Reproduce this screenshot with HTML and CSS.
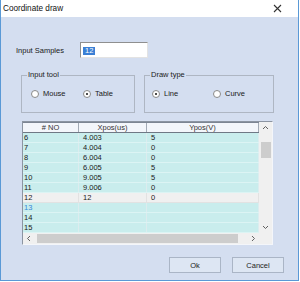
FILE: index.html
```html
<!DOCTYPE html>
<html lang="en">
<head>
    <meta charset="UTF-8">
    <title>Coordinate draw</title>
    <link rel="stylesheet" href="styles.css">
</head>
<body>

    <div class="window">
        <div class="titlebar">
            <span class="title">Coordinate draw</span>
            <svg class="close" width="9" height="9" viewBox="0 0 9 9">
                <path d="M1 1 L8 8 M8 1 L1 8" stroke="#333" stroke-width="1.1" fill="none"/>
            </svg>
        </div>

        <div class="content">
            <div class="samples">
                <label for="samples">Input Samples</label>
                <div class="textbox"><span class="selected">12</span></div>
            </div>

            <div class="groups">
                <fieldset class="group group-tool">
                    <legend>Input tool</legend>
                    <div class="radios">
                        <span class="radio"><i class="dot"></i>Mouse</span>
                        <span class="radio"><i class="dot on"></i>Table</span>
                    </div>
                </fieldset>
                <fieldset class="group group-type">
                    <legend>Draw type</legend>
                    <div class="radios">
                        <span class="radio"><i class="dot on"></i>Line</span>
                        <span class="radio"><i class="dot"></i>Curve</span>
                    </div>
                </fieldset>
            </div>

            <div class="grid">
                <div class="grid-main">
                    <div class="table">
                        <div class="row head">
                            <span>#&nbsp;NO</span><span>Xpos(us)</span><span>Ypos(V)</span>
                        </div>
                        <div class="row"><span>6</span><span>4.003</span><span>5</span></div>
                        <div class="row"><span>7</span><span>4.004</span><span>0</span></div>
                        <div class="row"><span>8</span><span>6.004</span><span>0</span></div>
                        <div class="row"><span>9</span><span>6.005</span><span>5</span></div>
                        <div class="row"><span>10</span><span>9.005</span><span>5</span></div>
                        <div class="row"><span>11</span><span>9.006</span><span>0</span></div>
                        <div class="row current"><span>12</span><span>12</span><span>0</span></div>
                        <div class="row new"><span>13</span><span></span><span></span></div>
                        <div class="row"><span>14</span><span></span><span></span></div>
                        <div class="row"><span>15</span><span></span><span></span></div>
                    </div>
                    <div class="vscroll">
                        <svg width="7" height="5" viewBox="0 0 7 5"><path d="M1 4 L3.5 1.5 L6 4" stroke="#606060" fill="none"/></svg>
                        <div class="vthumb"></div>
                        <div class="spacer"></div>
                        <svg width="7" height="5" viewBox="0 0 7 5"><path d="M1 1 L3.5 3.5 L6 1" stroke="#606060" fill="none"/></svg>
                    </div>
                </div>
                <div class="grid-foot">
                    <div class="hscroll">
                        <svg width="5" height="7" viewBox="0 0 5 7"><path d="M4 1 L1.5 3.5 L4 6" stroke="#606060" fill="none"/></svg>
                        <div class="hthumb"></div>
                        <svg width="5" height="7" viewBox="0 0 5 7"><path d="M1 1 L3.5 3.5 L1 6" stroke="#606060" fill="none"/></svg>
                    </div>
                    <div class="corner"></div>
                </div>
            </div>

            <div class="buttons">
                <button>Ok</button>
                <button>Cancel</button>
            </div>
        </div>
    </div>

</body>
</html>
```

FILE: styles.css
```css
/* Page */
body {
    margin: 0;
    background: #ffffff;
    font-family: 'Liberation Sans', Arial, sans-serif;
    font-size: 7.5px;
    color: #1a1a1a;
}
/* Dialog window */
.window {
    width: 299px;
    height: 281px;
    box-sizing: border-box;
    border: 1px solid #5a99d6;
    border-top: none;
    background: #d4def0;
}
.titlebar {
    height: 17px;
    background: #ffffff;
    display: flex;
    justify-content: space-between;
    align-items: center;
    padding: 0 16px 0 2px;
}
.title {
    font-size: 8.2px;
    color: #111;
}
/* Sample count row */
.content {
    display: flex;
    flex-direction: column;
}
.samples {
    display: flex;
    align-items: center;
    margin: 25px 0 0 15px;
    height: 16px;
}
.samples label {
    width: 64px;
}
.textbox {
    width: 68px;
    height: 16px;
    box-sizing: border-box;
    background: #fff;
    border: 1px solid #8f8f8f;
    border-right-color: #e3e3e3;
    border-bottom-color: #e3e3e3;
    padding: 3px 0 0 2px;
}
.selected {
    display: inline-block;
    background: #3a7fd5;
    color: #fff;
    padding: 0 2px;
    line-height: 8px;
}
/* Option groups */
.groups {
    display: flex;
    gap: 9px;
    margin: 12px 0 0 20px;
}
.group {
    margin: 0;
    padding: 0;
    height: 43px;
    box-sizing: border-box;
    border: 1px solid #aeb6c3;
}
.group legend {
    margin-left: 5px;
    padding: 0 1px;
    line-height: 10px;
}
.group-tool {
    width: 114px;
}
.group-type {
    width: 130px;
}
.radios {
    display: grid;
    margin-top: 9px;
}
.group-tool .radios {
    grid-template-columns: 52px 1fr;
    padding-left: 9px;
}
.group-type .radios {
    grid-template-columns: 61px 1fr;
    padding-left: 7px;
}
.radio {
    display: flex;
    align-items: center;
    gap: 4px;
}
.dot {
    width: 6px;
    height: 6px;
    border-radius: 50%;
    border: 1px solid #8a8a8a;
    background: #fff;
    position: relative;
}
.dot.on::after {
    content: "";
    position: absolute;
    left: 2px;
    top: 2px;
    width: 2px;
    height: 2px;
    border-radius: 50%;
    background: #111;
}
/* Data grid */
.grid {
    margin: 8px 0 0 21px;
    width: 251px;
    height: 124px;
    box-sizing: border-box;
    border: 1px solid #8c95a2;
    border-right-color: #f4f6fa;
    border-bottom-color: #f4f6fa;
    background: #f0f0f0;
}
.grid-main {
    display: flex;
    height: 111px;
}
.table {
    width: 236px;
}
.row {
    display: grid;
    grid-template-columns: 56px 68px 112px;
    height: 10px;
    background: #c9eded;
    box-sizing: border-box;
    border-bottom: 1px solid #dcf4f4;
}
.row span {
    padding-left: 4px;
    line-height: 9px;
    border-right: 1px solid #dcecee;
}
.row span:first-child {
    padding-left: 1px;
}
.row.head {
    height: 11px;
    background: #f3f6fb;
    border-top: 1px solid #7c8593;
    border-bottom: 1px solid #6f7885;
}
.row.head span {
    text-align: center;
    padding: 0;
    color: #333;
    border-right-color: #a2aab5;
}
.row.current {
    background: #f0f0f0;
    border-bottom-color: #e2e2e2;
}
.row.current span {
    border-right-color: #e2e2e2;
}
.row.new span:first-child {
    color: #3487d6;
}
.vscroll {
    width: 13px;
    display: flex;
    flex-direction: column;
    align-items: center;
    padding: 3px 0 3px;
    box-sizing: border-box;
    background: #f0f0f0;
}
.vthumb {
    width: 10px;
    height: 16px;
    background: #cdcdcd;
    margin-top: 12px;
}
.spacer {
    flex: 1;
}
.grid-foot {
    display: flex;
    height: 11px;
}
.hscroll {
    width: 236px;
    display: flex;
    align-items: center;
    padding: 0 3px;
    box-sizing: border-box;
    background: #f0f0f0;
}
.hthumb {
    width: 202px;
    height: 9px;
    margin: 0 13px 0 6px;
    background: #cdcdcd;
}
.corner {
    flex: 1;
}
/* Dialog buttons */
.buttons {
    display: flex;
    justify-content: flex-end;
    gap: 11px;
    margin: 12px 14px 0 0;
}
button {
    width: 52px;
    height: 16px;
    font-family: 'Liberation Sans', Arial, sans-serif;
    font-size: 7.5px;
    color: #222;
    background: #dde6f3;
    border: 1px solid #aab5c6;
    padding: 0;
}
```
